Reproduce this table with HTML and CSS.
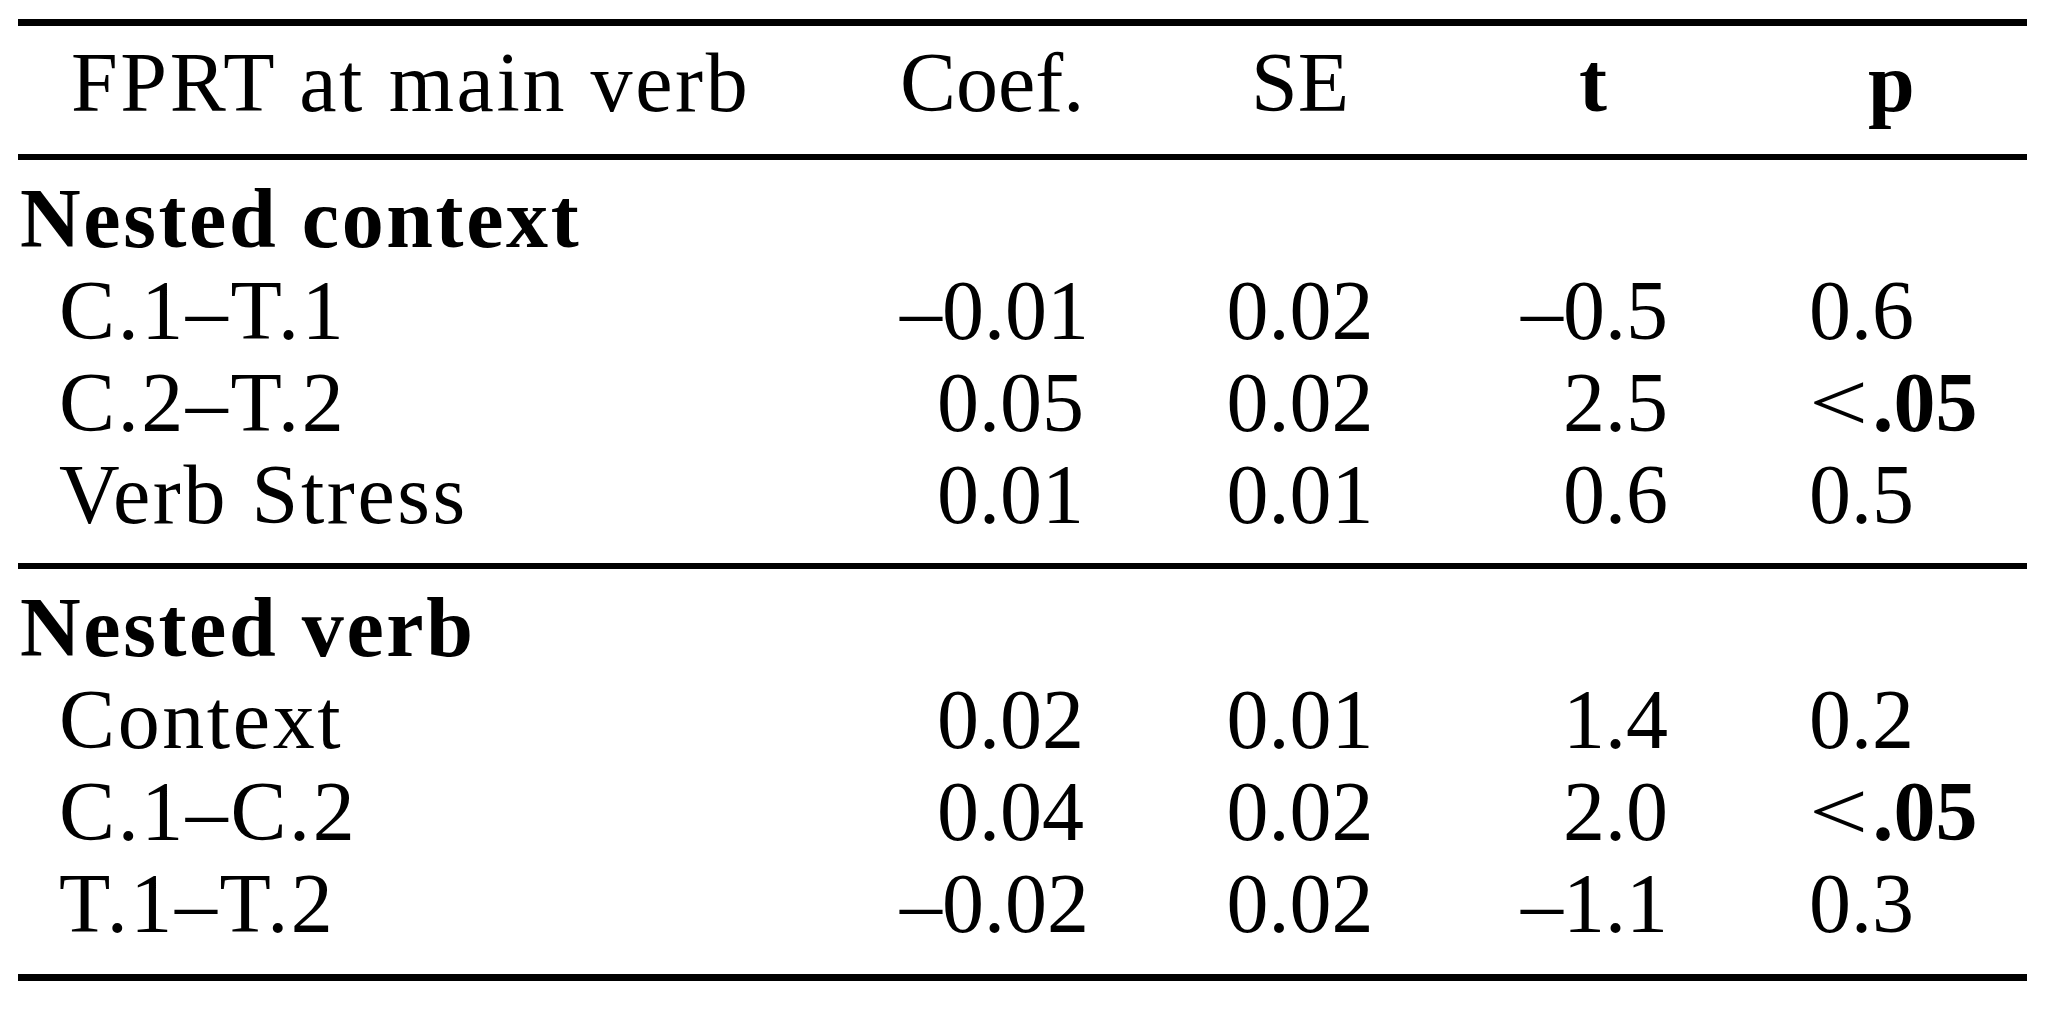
FILE: index.html
```html
<!DOCTYPE html>
<html lang="en">
<head>
    <meta charset="UTF-8">
    <meta name="viewport" content="width=device-width, initial-scale=1.0">
    <title>FPRT at main verb</title>
    <link rel="stylesheet" href="styles.css">
</head>
<body>
    <table class="results">
        <colgroup>
            <col class="col-label">
            <col class="col-coef">
            <col class="col-se">
            <col class="col-t">
            <col class="col-p">
        </colgroup>
        <thead>
            <tr>
                <th class="label">FPRT at main verb</th>
                <th class="coef">Coef.</th>
                <th class="se">SE</th>
                <th class="t"><b>t</b></th>
                <th class="p"><b>p</b></th>
            </tr>
        </thead>
        <tbody>
            <tr class="group"><td class="label" colspan="5"><b>Nested context</b></td></tr>
            <tr><td class="label sub">C.1–T.1</td><td class="coef">–0.01</td><td class="se">0.02</td><td class="t">–0.5</td><td class="p">0.6</td></tr>
            <tr><td class="label sub">C.2–T.2</td><td class="coef">0.05</td><td class="se">0.02</td><td class="t">2.5</td><td class="p"><span class="lt">&lt;</span><b>.05</b></td></tr>
            <tr class="last"><td class="label sub">Verb Stress</td><td class="coef">0.01</td><td class="se">0.01</td><td class="t">0.6</td><td class="p">0.5</td></tr>
        </tbody>
        <tbody>
            <tr class="group"><td class="label" colspan="5"><b>Nested verb</b></td></tr>
            <tr><td class="label sub">Context</td><td class="coef">0.02</td><td class="se">0.01</td><td class="t">1.4</td><td class="p">0.2</td></tr>
            <tr><td class="label sub">C.1–C.2</td><td class="coef">0.04</td><td class="se">0.02</td><td class="t">2.0</td><td class="p"><span class="lt">&lt;</span><b>.05</b></td></tr>
            <tr class="last"><td class="label sub">T.1–T.2</td><td class="coef">–0.02</td><td class="se">0.02</td><td class="t">–1.1</td><td class="p">0.3</td></tr>
        </tbody>
    </table>
</body>
</html>
```

FILE: styles.css
```css
body {
    margin: 0;
    background: #fff;
    color: #000;
    font-family: "Liberation Serif", "Times New Roman", serif;
}

.results {
    margin: 19px 0 0 18px;
    width: 2009px;
    table-layout: fixed;
    border-collapse: separate;
    border-spacing: 0;
    font-size: 84px;
}

.col-label { width: 882px; }
.col-coef { width: 200px; }
.col-se { width: 400px; }
.col-t { width: 200px; }
.col-p { width: 327px; }

th,
td {
    padding: 0;
    line-height: 92px;
    font-weight: normal;
    white-space: nowrap;
}

/* header row between the top rule and the mid rule */
.results thead th {
    border-top: 7px solid #000;
    border-bottom: 6px solid #000;
    padding-top: 11px;
    padding-bottom: 25px;
}

.label {
    text-align: left;
    padding-left: 2px;
    letter-spacing: 2.6px;
}
th.label { padding-left: 53px; }
.label.sub { padding-left: 41px; }

.coef {
    text-align: right;
    padding-right: 16px;
}
.se { text-align: center; }
.t {
    text-align: right;
    padding-right: 32px;
}
th.t {
    text-align: center;
    padding-left: 18px;
}
.p {
    text-align: left;
    padding-left: 109px;
}
th.p { padding-left: 168px; }

/* math less-than is wider than the text one */
.lt {
    display: inline-block;
    transform: scaleX(1.25);
    transform-origin: left center;
    margin-right: 16px;
}

.group td { padding-top: 13px; }

tbody:first-of-type .last td {
    padding-bottom: 22px;
    border-bottom: 6px solid #000;
}
tbody:last-of-type .last td {
    padding-bottom: 24px;
    border-bottom: 7px solid #000;
}
```
